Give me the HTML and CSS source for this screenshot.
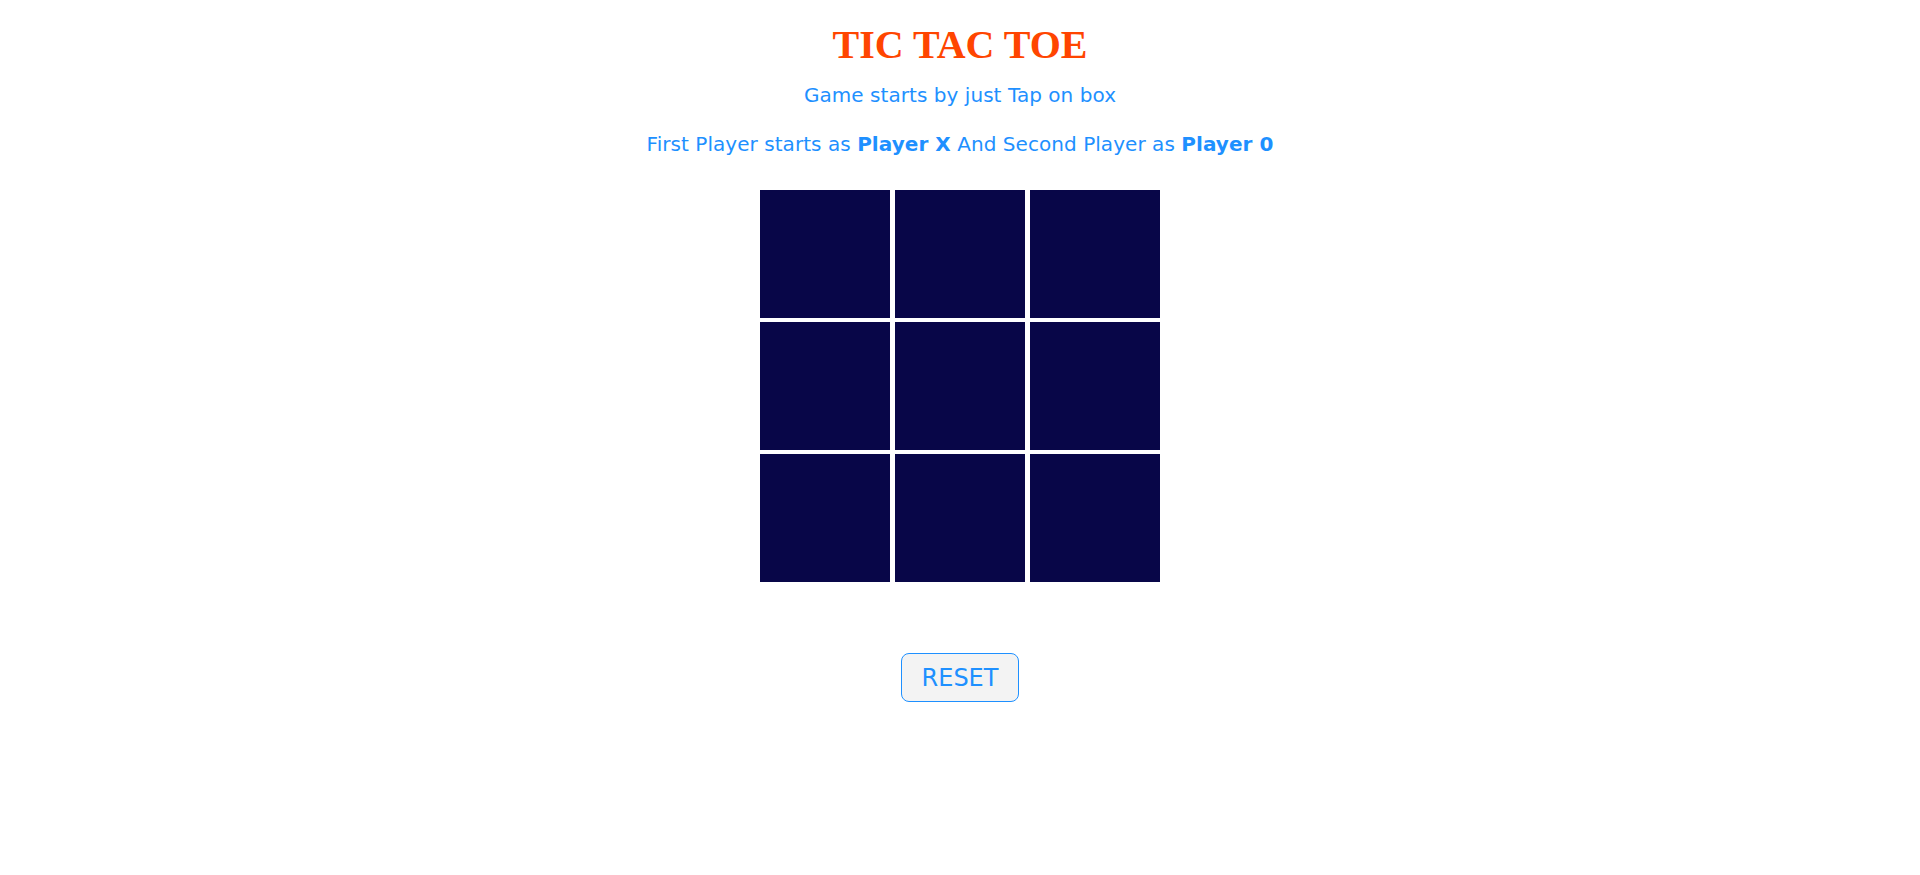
FILE: index.html
```html
<!DOCTYPE html>
<html lang="en">
<head>
    <meta charset="UTF-8">
    <meta name="viewport" content="width=device-width, initial-scale=1.0">
    <title>Tic Tac Toe</title>
    <link rel="stylesheet" href="styles.css">
</head>
<body>
    <h1 class="title">TIC TAC TOE</h1>
    <p class="info">Game starts by just Tap on box</p>
    <p class="info rules">First Player starts as <b>Player X</b> And Second Player as <b>Player 0</b></p>

    <div class="board" id="board">
        <div class="box"></div>
        <div class="box"></div>
        <div class="box"></div>
        <div class="box"></div>
        <div class="box"></div>
        <div class="box"></div>
        <div class="box"></div>
        <div class="box"></div>
        <div class="box"></div>
    </div>

    <div class="controls">
        <button type="button" class="reset-btn" onclick="resetGame()">RESET</button>
    </div>

    <script>
        var turn = "X";

        function resetGame() {
            var boxes = document.querySelectorAll(".box");
            boxes.forEach(function (box) {
                box.textContent = "";
            });
            turn = "X";
        }

        document.querySelectorAll(".box").forEach(function (box) {
            box.addEventListener("click", function () {
                if (box.textContent !== "") return;
                box.textContent = turn;
                turn = turn === "X" ? "0" : "X";
            });
        });
    </script>
</body>
</html>
```

FILE: styles.css
```css
body {
    margin: 0;
    background-color: #ffffff;
    font-family: "DejaVu Sans", Verdana, sans-serif;
    color: #1e90ff; /* dodger blue */
    text-align: center;
}

.title {
    font-family: "Liberation Serif", "Times New Roman", serif;
    font-size: 40px;
    font-weight: bold;
    line-height: 46px;
    color: #ff4500; /* orange red */
    margin: 22px 0 0;
}

.info {
    font-size: 20px;
    line-height: 23px;
    letter-spacing: 0.05px;
    margin: 16px 0 0;
}

.rules {
    margin-top: 26px;
}

.board {
    display: grid;
    grid-template-columns: repeat(3, 130px);
    grid-template-rows: repeat(3, 128px);
    column-gap: 5px;
    row-gap: 4px;
    width: 400px;
    margin: 34px auto 0;
}

.box {
    background-color: #080648;
    color: #ffffff;
    font-size: 60px;
    display: flex;
    justify-content: center;
    align-items: center;
    cursor: pointer;
}

.controls {
    margin-top: 71px;
}

.reset-btn {
    font-family: "DejaVu Sans", Verdana, sans-serif;
    font-size: 24px;
    line-height: 29px;
    color: #1e90ff;
    background-color: #f3f3f3;
    border: 1px solid #1e90ff;
    border-radius: 8px;
    padding: 10px 20px 8px;
    cursor: pointer;
}
```
